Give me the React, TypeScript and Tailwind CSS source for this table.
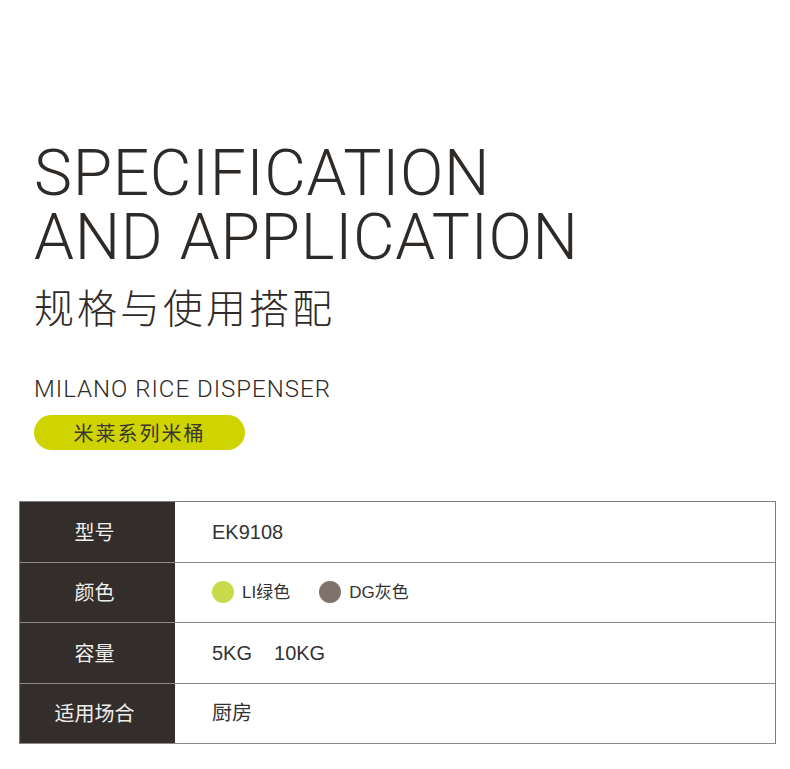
import React from "react";

const rows: { label: string; content: React.ReactNode }[] = [
  { label: "型号", content: <span>EK9108</span> },
  {
    label: "颜色",
    content: (
      <div className="flex items-center text-[17px]">
        <span className="w-[22px] h-[22px] rounded-full bg-[#c9da4c]" />
        <span className="ml-[8px]">LI绿色</span>
        <span className="ml-[29px] w-[22px] h-[22px] rounded-full bg-[#7f726b]" />
        <span className="ml-[8px]">DG灰色</span>
      </div>
    ),
  },
  {
    label: "容量",
    content: (
      <span>
        5KG<span className="inline-block w-[22px]" />10KG
      </span>
    ),
  },
  { label: "适用场合", content: <span>厨房</span> },
];

export default function App() {
  return (
    <div className="w-[790px] h-[769px] bg-white text-[#2e2a27] overflow-hidden">
      <div className="pl-[34px] pt-[142px]">
        <h1
          className="text-[64px] leading-[64px] font-light tracking-[0.7px]"
          style={{ fontFamily: "Roboto, 'Liberation Sans', sans-serif" }}
        >
          <div>SPECIFICATION</div>
          <div>AND APPLICATION</div>
        </h1>
        <div
          className="mt-[12px] text-[40px] leading-[48px] tracking-[3px] font-light"
          style={{ fontFamily: "'Noto Sans CJK SC', sans-serif" }}
        >
          规格与使用搭配
        </div>
        <div
          className="mt-[45px] text-[24px] leading-[28px] font-light tracking-[1px]"
          style={{ fontFamily: "Roboto, 'Liberation Sans', sans-serif" }}
        >
          MILANO RICE DISPENSER
        </div>
        <div
          className="mt-[12px] w-[211px] h-[35px] rounded-full bg-[#cfd300] flex items-center justify-center text-[20px] tracking-[2px] text-[#3a3530]"
          style={{ fontFamily: "'Noto Sans CJK SC', sans-serif" }}
        >
          米莱系列米桶
        </div>
      </div>
      <div
        className="ml-[19px] mt-[51px] w-[757px] border-t border-l border-r border-[#7d7d7d]"
        style={{ fontFamily: "'Liberation Sans', 'Noto Sans CJK SC', sans-serif" }}
      >
        {rows.map((r) => (
          <div key={r.label} className="flex h-[60.5px] border-b border-[#8a8a8a]">
            <div className="w-[155px] bg-[#332e2b] text-[#f0eeec] text-[20px] flex items-center justify-center pt-[2px] pr-[6px]">
              {r.label}
            </div>
            <div className="flex-1 flex items-center pl-[37px] text-[20px] text-[#333]">
              {r.content}
            </div>
          </div>
        ))}
      </div>
    </div>
  );
}
